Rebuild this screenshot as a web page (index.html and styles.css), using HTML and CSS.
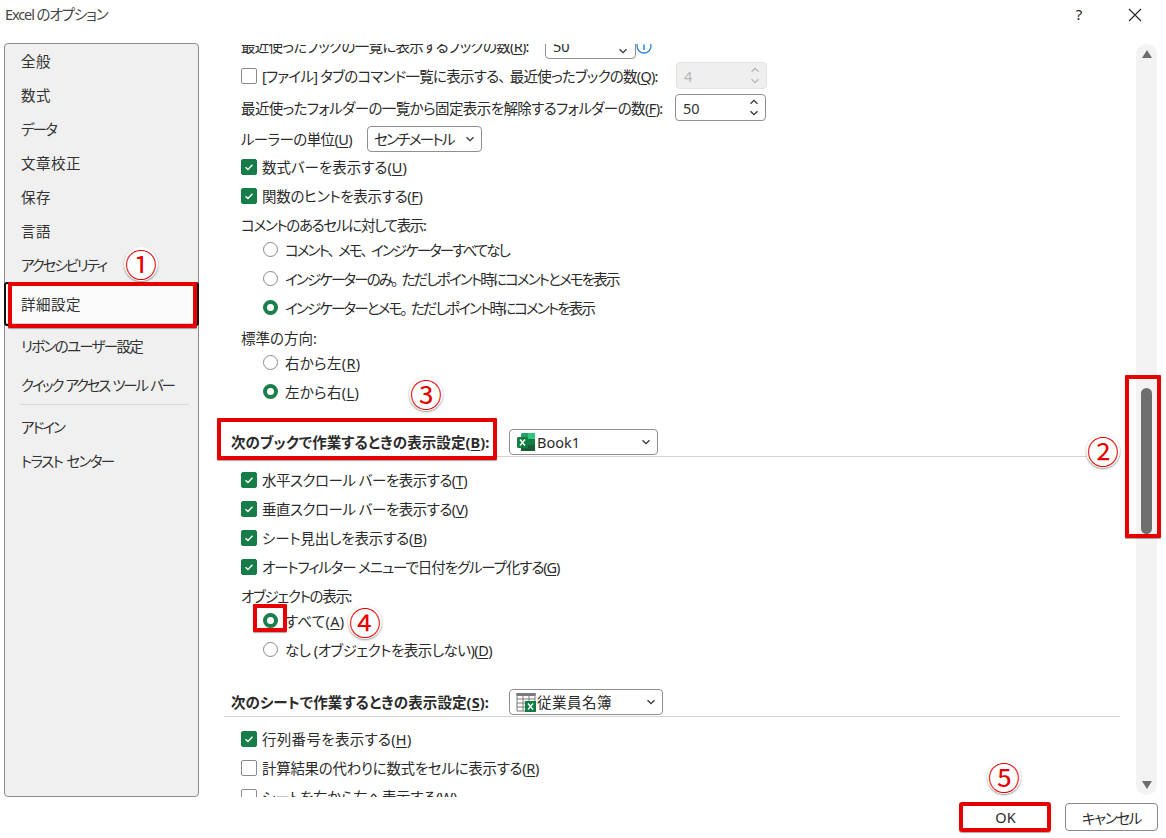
FILE: index.html
```html
<!DOCTYPE html>
<html lang="ja">
<head>
<meta charset="utf-8">
<title>Excel のオプション</title>
<link rel="stylesheet" href="styles.css">
</head>
<body>
<svg class="defs" width="0" height="0">
  <symbol id="tick" viewBox="0 0 16 16"><path d="M4 8.2l2.8 2.6L12 5.4" fill="none" stroke="#fff" stroke-width="1.6"/></symbol>
  <symbol id="down" viewBox="0 0 10 6"><path d="M1.5 1.2L5 4.6l3.5-3.4" fill="none" stroke="#333" stroke-width="1.3"/></symbol>
  <symbol id="up" viewBox="0 0 10 6"><path d="M1.5 4.8L5 1.4l3.5 3.4" fill="none" stroke="#333" stroke-width="1.3"/></symbol>
</svg>
<div class="dialog">
  <header class="titlebar">
    <span class="title">Excel のオプション</span>
    <span class="help">?</span>
    <svg class="close" viewBox="0 0 14 14" width="14" height="14"><path d="M1 1l12 12M13 1L1 13" stroke="#222" stroke-width="1.1" fill="none"/></svg>
  </header>

  <main class="main">
    <nav class="sidebar">
      <div class="nav ls-p05">全般</div>
      <div class="nav ls-p05">数式</div>
      <div class="nav ls-19">データ</div>
      <div class="nav ls-p05">文章校正</div>
      <div class="nav ls-p05">保存</div>
      <div class="nav ls-p05">言語</div>
      <div class="nav ls-21">アクセシビリティ</div>
      <div class="nav selected ls-p05">詳細設定</div>
      <div class="nav after-selected ls-17">リボンのユーザー設定</div>
      <div class="nav after-ribbon ls-23 spaced">クイック アクセス ツール バー</div>
      <div class="nav-sep"></div>
      <div class="nav ls-19">アドイン</div>
      <div class="nav ls-16 spaced">トラスト センター</div>
    </nav>

    <section class="content">
      <div class="inner">
        <div class="row indent1">
          <span class="lbl lbl-recent ls-07">最近使ったブックの一覧に表示するブックの数(<u>R</u>):</span>
          <span class="field spin-first"><span>50</span><svg class="chev-single"><use href="#down"/></svg></span>
          <svg class="info" viewBox="0 0 16 16" width="16" height="16"><circle cx="8" cy="8" r="7" fill="none" stroke="#2b88d8" stroke-width="1.3"/><path d="M8 3.5v1.6M8 6.5v5.5" stroke="#2b88d8" stroke-width="1.5"/></svg>
        </div>
        <div class="row mt5 indent1">
          <span class="box"></span>
          <span class="lbl lbl-file ls-075">[ファイル] タブのコマンド一覧に表示する<span class="pun">、</span>最近使ったブックの数(<u>Q</u>):</span>
          <span class="field spin disabled"><span>4</span><span class="arrows"><svg><use href="#up"/></svg><svg><use href="#down"/></svg></span></span>
        </div>
        <div class="row mt7 indent1">
          <span class="lbl lbl-folder ls-06">最近使ったフォルダーの一覧から固定表示を解除するフォルダーの数(<u>F</u>):</span>
          <span class="field spin"><span class="num">50</span><span class="arrows"><svg><use href="#up"/></svg><svg><use href="#down"/></svg></span></span>
        </div>
        <div class="row mt6 indent1">
          <span class="lbl lbl-ruler ls-06">ルーラーの単位(<u>U</u>)</span>
          <span class="field select ruler"><span class="ls-17">センチメートル</span><svg class="chev"><use href="#down"/></svg></span>
        </div>
        <div class="row mt3 indent1"><span class="box on"><svg><use href="#tick"/></svg></span><span class="lbl">数式バーを表示する(<u>U</u>)</span></div>
        <div class="row mt4 indent1"><span class="box on"><svg><use href="#tick"/></svg></span><span class="lbl ls-03">関数のヒントを表示する(<u>F</u>)</span></div>
        <div class="row mt4 indent1"><span class="lbl ls-13">コメントのあるセルに対して表示:</span></div>
        <div class="row indent2"><span class="radio"></span><span class="lbl ls-19">コメント<span class="pun">、</span>メモ<span class="pun">、</span>インジケーターすべてなし</span></div>
        <div class="row mt4 indent2"><span class="radio"></span><span class="lbl ls-185">インジケーターのみ<span class="pun">。</span>ただしポイント時にコメントとメモを表示</span></div>
        <div class="row mt4 indent2"><span class="radio on"></span><span class="lbl ls-185">インジケーターとメモ<span class="pun">。</span>ただしポイント時にコメントを表示</span></div>
        <div class="row mt5 indent1"><span class="lbl">標準の方向:</span></div>
        <div class="row indent2"><span class="radio"></span><span class="lbl ls-p03">右から左(<u>R</u>)</span></div>
        <div class="row mt4 indent2"><span class="radio on"></span><span class="lbl ls-p03">左から右(<u>L</u>)</span></div>

        <div class="section mt25">
          <b class="heading">次のブックで作業するときの表示設定(<u>B</u>):</b>
          <span class="field select book">
            <svg class="file-icon" viewBox="0 0 20 20" width="20" height="20">
              <rect x="5" y="1" width="14" height="18" rx="1.5" fill="#21a366"/>
              <rect x="12" y="1" width="7" height="6" fill="#33c481"/>
              <rect x="5" y="10" width="14" height="9" fill="#185c37"/>
              <rect x="12" y="7" width="7" height="6" fill="#107c41"/>
              <rect x="1" y="5" width="11" height="11" rx="1.5" fill="#107c41"/>
              <path d="M4 7.5l5 6M9 7.5l-5 6" stroke="#fff" stroke-width="1.5"/>
            </svg>
            <span class="file-name">Book1</span><svg class="chev"><use href="#down"/></svg>
          </span>
        </div>
        <div class="row mt10 indent1"><span class="box on"><svg><use href="#tick"/></svg></span><span class="lbl ls-05">水平スクロール バーを表示する(<u>T</u>)</span></div>
        <div class="row mt4 indent1"><span class="box on"><svg><use href="#tick"/></svg></span><span class="lbl ls-05">垂直スクロール バーを表示する(<u>V</u>)</span></div>
        <div class="row mt4 indent1"><span class="box on"><svg><use href="#tick"/></svg></span><span class="lbl ls-015">シート見出しを表示する(<u>B</u>)</span></div>
        <div class="row mt4 indent1"><span class="box on"><svg><use href="#tick"/></svg></span><span class="lbl ls-11">オートフィルター メニューで日付をグループ化する(<u>G</u>)</span></div>
        <div class="row mt4 indent1"><span class="lbl ls-13">オブジェクトの表示:</span></div>
        <div class="row indent2"><span class="radio on"></span><span class="lbl ls-p03">すべて(<u>A</u>)</span></div>
        <div class="row mt4 indent2"><span class="radio"></span><span class="lbl ls-05">なし (オブジェクトを表示しない)(<u>D</u>)</span></div>

        <div class="section mt27">
          <b class="heading">次のシートで作業するときの表示設定(<u>S</u>):</b>
          <span class="field select sheet">
            <svg class="file-icon" viewBox="0 0 20 20" width="20" height="20">
              <path d="M0.5 1h19v3h-19z" fill="#7a7a7a"/>
              <path d="M1 1v18h10M7 1v18M13 1v8M19 1v8M1 7h18M1 11h10M1 15h10" fill="none" stroke="#7a7a7a" stroke-width="1"/>
              <rect x="9" y="9" width="11" height="11" fill="#107c41"/>
              <path d="M12 11.5l5 6M17 11.5l-5 6" stroke="#fff" stroke-width="1.4"/>
            </svg>
            <span class="file-name ls-p05">従業員名簿</span><svg class="chev"><use href="#down"/></svg>
          </span>
        </div>
        <div class="row mt9 indent1"><span class="box on"><svg><use href="#tick"/></svg></span><span class="lbl ls-p03">行列番号を表示する(<u>H</u>)</span></div>
        <div class="row mt4 indent1"><span class="box"></span><span class="lbl ls-03">計算結果の代わりに数式をセルに表示する(<u>R</u>)</span></div>
        <div class="row mt4 indent1"><span class="box"></span><span class="lbl ls-03">シートを右から左へ表示する(<u>W</u>)</span></div>
      </div>
    </section>

    <aside class="scrollbar">
      <span class="tri-up"></span>
      <span class="track"><span class="thumb"></span></span>
      <span class="tri-down"></span>
    </aside>
  </main>

  <footer class="footer">
    <button class="btn ok">OK</button>
    <button class="btn"><span class="ls-13">キャンセル</span></button>
  </footer>

  <div class="red red1"></div>
  <div class="red red2"></div>
  <div class="red red3"></div>
  <div class="red red4"></div>
  <div class="red red5"></div>
  <span class="badge b1">①</span>
  <span class="badge b2">②</span>
  <span class="badge b3">③</span>
  <span class="badge b4">④</span>
  <span class="badge b5">⑤</span>
</div>
</body>
</html>
```
FILE: styles.css
```css
* { box-sizing: border-box; }
html, body { margin: 0; padding: 0; background: #fff; }
body {
  font-family: "Noto Sans", "Noto Sans CJK JP", sans-serif;
  font-size: 14.5px;
  color: #2b2b2b;
  font-feature-settings: "palt";
}
.defs { position: absolute; }
.dialog { position: relative; width: 1166px; height: 838px; overflow: hidden; display: flex; flex-direction: column; }

.ls-p05 { letter-spacing: .5px; }
.ls-p03 { letter-spacing: .3px; }
.ls-015 { letter-spacing: -.15px; }
.ls-03 { letter-spacing: -.3px; }
.ls-05 { letter-spacing: -.5px; }
.ls-06 { letter-spacing: -.6px; }
.ls-07 { letter-spacing: -.7px; }
.ls-075 { letter-spacing: -.75px; }
.ls-11 { letter-spacing: -1.1px; }
.ls-13 { letter-spacing: -1.3px; }
.ls-16 { letter-spacing: -1.6px; }
.ls-17 { letter-spacing: -1.7px; }
.ls-185 { letter-spacing: -1.85px; }
.ls-19 { letter-spacing: -1.9px; }
.ls-21 { letter-spacing: -2.1px; }
.ls-23 { letter-spacing: -2.3px; }
.spaced { word-spacing: 2px; }
.pun { margin-right: 5px; }

.titlebar { height: 43px; flex: none; display: flex; align-items: flex-start; padding: 4px 24px 0 5px; line-height: 20px; }
.title { flex: 1; color: #444; letter-spacing: -1.1px; }
.help { width: 14px; margin-right: 42px; text-align: center; font-size: 15px; color: #222; }
.close { margin-top: 4px; }

.main { height: 754px; flex: none; display: flex; }
.sidebar { width: 195px; margin-left: 4px; flex: none; background: #f0f0f0; border: 1px solid #8c8c8c; border-radius: 4px; }
.nav { height: 34px; display: flex; align-items: center; padding-left: 16px; padding-bottom: 1px; color: #333; white-space: pre; }
.selected { height: 44px; margin: 0 -1px; padding-left: 15px; background: #fafafa; border: 2px solid #111; border-radius: 3px; box-shadow: inset 0 -1px 0 #cfcfcf; }
.after-selected { margin-top: 3px; }
.after-ribbon { margin-top: 5px; }
.nav-sep { height: 1px; margin: 2px 9px 5px 15px; background: #d8d8d8; }

.content { width: 937px; flex: none; overflow: hidden; height: 753px; margin-top: 1px; padding: 0 16px 0 25px; }
.inner { margin-top: -11px; }
.row { height: 25px; display: flex; align-items: center; white-space: nowrap; line-height: 18px; }
.row u, .heading u { text-underline-offset: 2px; }
.indent1 { margin-left: 17px; }
.indent2 { margin-left: 39px; }
.mt3 { margin-top: 3px; } .mt4 { margin-top: 4px; } .mt5 { margin-top: 5px; } .mt6 { margin-top: 6px; } .mt7 { margin-top: 7px; }
.mt9 { margin-top: 9px; } .mt10 { margin-top: 10px; } .mt25 { margin-top: 25px; } .mt27 { margin-top: 27px; }

.lbl { flex: none; white-space: pre; }
.lbl-recent { width: 304px; }
.lbl-file { width: 414px; }
.lbl-folder { width: 434px; }
.lbl-ruler { width: 126px; }

.box { width: 16px; height: 16px; flex: none; margin-right: 5px; border: 1px solid #8a8a8a; border-radius: 2px; background: #fff; }
.box.on { background: #167c48; border-color: #167c48; }
.box svg { display: block; width: 14px; height: 14px; }
.radio { width: 15px; height: 15px; flex: none; margin-right: 7px; border: 1px solid #8a8a8a; border-radius: 50%; background: #fff; }
.radio.on { border: 4px solid #1a7f4b; }

.field { display: inline-flex; align-items: center; flex: none; background: #fff; border: 1px solid #8f8f8f; border-radius: 4px; height: 26px; position: relative; }
.spin { width: 91px; height: 27px; padding-left: 7px; padding-right: 6px; justify-content: space-between; }
.arrows { display: flex; flex-direction: column; gap: 5px; }
.arrows svg { display: block; width: 10px; height: 6px; }
.num { color: #333; }
.disabled { background: #efefef; border-color: #e2e2e2; color: #b5b5b5; }
.disabled svg { opacity: .3; }
.spin-first { width: 91px; height: 27px; padding-left: 7px; }
.chev-single { position: absolute; right: 7px; bottom: 4px; width: 10px; height: 6px; }
.info { flex: none; }
.select { padding-left: 6px; padding-right: 6px; justify-content: space-between; }
.chev { width: 10px; height: 6px; flex: none; }
.ruler { width: 115px; }
.section { height: 28px; display: flex; align-items: center; padding-left: 7px; padding-bottom: 2px; border-bottom: 1px solid #d4d4d4; position: relative; line-height: 18px; }
.heading { font-weight: 700; color: #2b2b2b; width: 278px; flex: none; letter-spacing: .1px; }
.book { width: 149px; }
.sheet { width: 154px; }
.file-icon { flex: none; margin-right: 1px; }
.file-name { flex: 1; }

.scrollbar { width: 21px; height: 751px; flex: none; margin-top: 1px; background: #f3f3f3; border-radius: 10px; display: flex; flex-direction: column; align-items: center; padding: 6px 0; }
.tri-up { width: 0; height: 0; border-left: 5px solid transparent; border-right: 5px solid transparent; border-bottom: 8px solid #6e6e6e; flex: none; }
.tri-down { width: 0; height: 0; border-left: 5px solid transparent; border-right: 5px solid transparent; border-top: 8px solid #6e6e6e; flex: none; }
.track { flex: 1; width: 100%; display: flex; justify-content: center; padding-top: 330px; }
.thumb { display: block; width: 11px; height: 146px; background: #6e6e6e; border-radius: 6px; }

.footer { flex: 1; display: flex; justify-content: flex-end; padding: 6px 8px 0 0; gap: 14px; align-items: flex-start; }
.btn { width: 93px; height: 28px; font: inherit; font-feature-settings: "palt"; background: #fff; color: #2b2b2b; border: 1px solid #8a8a8a; border-radius: 4px; padding: 0; }
.ok { width: 91px; border: 2px solid #111; }

.red { position: absolute; border: 4px solid #e60000; border-radius: 1px; box-shadow: 0 1px 1px rgba(0,0,0,.35); pointer-events: none; }
.red1 { left: 8px; top: 282px; width: 189px; height: 46px; }
.red2 { left: 1125px; top: 375px; width: 36px; height: 163px; }
.red3 { left: 217px; top: 418px; width: 280px; height: 42px; }
.red4 { left: 253px; top: 604px; width: 34px; height: 28px; }
.red5 { left: 959px; top: 802px; width: 92px; height: 30px; border-radius: 3px; }

.badge { position: absolute; width: 34px; height: 34px; border-radius: 50%; background: #fff; box-shadow: 0 1px 2px rgba(0,0,0,.4); color: #e60000; font-family: "Noto Sans CJK JP", sans-serif; font-size: 32px; line-height: 32px; text-align: center; font-feature-settings: normal; }
.b1 { left: 124px; top: 247px; }
.b2 { left: 1086px; top: 434px; }
.b3 { left: 409px; top: 377px; }
.b4 { left: 348px; top: 605px; }
.b5 { left: 987px; top: 760px; }
```
